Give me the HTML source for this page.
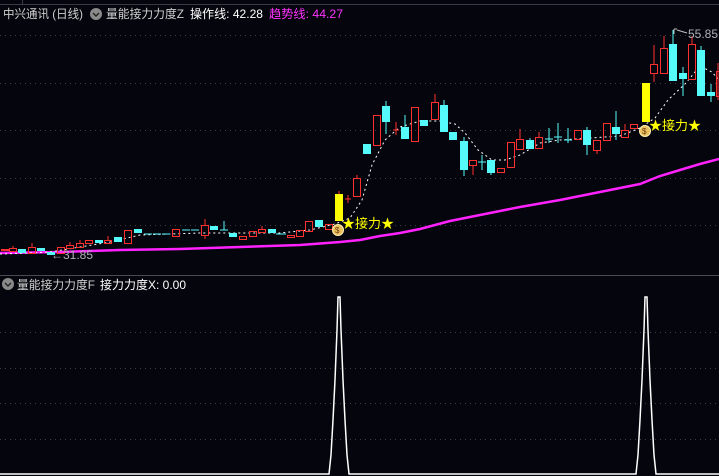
<!DOCTYPE html>
<html><head><meta charset="utf-8"><style>
html,body{margin:0;padding:0;background:#05050d;width:719px;height:476px;overflow:hidden}
svg{display:block}
text{font-family:"Liberation Sans","Noto Sans CJK SC",sans-serif}
</style></head><body>
<svg width="719" height="476" viewBox="0 0 719 476" xmlns="http://www.w3.org/2000/svg">
<rect width="719" height="476" fill="#05050d"/>
<line x1="0" y1="4.5" x2="719" y2="4.5" stroke="#3a3a44"/>
<line x1="22.5" y1="0" x2="22.5" y2="4" stroke="#3a3a44"/>
<g stroke="#3c3c44" stroke-dasharray="1,4">
<line x1="0" y1="35.5" x2="719" y2="35.5"/><line x1="0" y1="83.5" x2="719" y2="83.5"/>
<line x1="0" y1="130.5" x2="719" y2="130.5"/><line x1="0" y1="178.5" x2="719" y2="178.5"/>
<line x1="0" y1="225.5" x2="719" y2="225.5"/>
<line x1="0" y1="332.5" x2="719" y2="332.5"/><line x1="0" y1="368.5" x2="719" y2="368.5"/>
<line x1="0" y1="403.5" x2="719" y2="403.5"/><line x1="0" y1="439.5" x2="719" y2="439.5"/>
</g>
<line x1="0" y1="275.5" x2="719" y2="275.5" stroke="#4a4a52"/>
<!-- header -->
<text x="3" y="18" font-size="12" fill="#d0d0d0" textLength="80" lengthAdjust="spacingAndGlyphs">中兴通讯 (日线)</text>
<circle cx="96" cy="14" r="6" fill="#8a8a8a"/><path d="M93 13l3 3 3-3" stroke="#222" stroke-width="1.4" fill="none"/>
<text x="106" y="18" font-size="12" fill="#d0d0d0" textLength="78" lengthAdjust="spacingAndGlyphs">量能接力力度Z</text>
<text x="190" y="18" font-size="12" fill="#ffffff" textLength="73" lengthAdjust="spacingAndGlyphs">操作线: 42.28</text>
<text x="269" y="18" font-size="12" fill="#ff33ff" textLength="74" lengthAdjust="spacingAndGlyphs">趋势线: 44.27</text>
<circle cx="8" cy="284" r="6" fill="#8a8a8a"/><path d="M5 283l3 3 3-3" stroke="#222" stroke-width="1.4" fill="none"/>
<text x="17" y="289" font-size="12" fill="#d0d0d0" textLength="78" lengthAdjust="spacingAndGlyphs">量能接力力度F</text>
<text x="100" y="289" font-size="12" fill="#ffffff" textLength="86" lengthAdjust="spacingAndGlyphs">接力力度X: 0.00</text>
<!-- trend line -->
<polyline fill="none" stroke="#ff22ff" stroke-width="2.5" points="0,253 60,252 120,250 180,249 240,247 300,245 340,242 360,240 380,236 400,233 420,229 450,221 480,215 520,207 560,200 600,192 640,184 660,176 680,170 700,164 719,159"/>
<!-- MA dashed -->
<polyline fill="none" stroke="#ffffff" stroke-width="1" stroke-dasharray="2,3" points="0,254 30,253 50,252 80,247 110,242 140,235 170,234 200,233 240,233 280,233 310,230 335,224 350,218 362,200 372,165 385,140 400,127 420,121 440,121 455,124 465,133 478,150 492,160 505,160 520,155 540,143 560,140 590,138 620,136 640,128 655,118 668,100 685,84 700,66 712,72 719,80"/>
<!-- candles red -->
<g fill="none" stroke="#ff3030" stroke-width="1">
<path d="M13,246V248M32,243V247M70,242V245M80,240V243M108,236V240M205,219V225M205,235V239M262,226V229M357,175V178M348,195V203M345,199H351"/>
<rect x="1.5" y="249.5" width="7" height="1"/><rect x="9.5" y="248.5" width="7" height="3"/><rect x="28.5" y="247.5" width="7" height="6"/>
<rect x="57.5" y="247.5" width="7" height="6"/><rect x="66.5" y="245.5" width="7" height="3"/><rect x="76.5" y="243.5" width="7" height="4"/>
<rect x="85.5" y="240.5" width="7" height="3"/><rect x="104.5" y="240.5" width="7" height="3"/><rect x="124.5" y="230.5" width="7" height="13"/>
<rect x="172.5" y="229.5" width="7" height="7"/><rect x="201.5" y="225.5" width="7" height="10"/><rect x="239.5" y="236.5" width="7" height="3"/>
<rect x="249.5" y="231.5" width="7" height="5"/><rect x="258.5" y="229.5" width="7" height="3"/><rect x="287.5" y="235.5" width="7" height="2"/>
<rect x="296.5" y="230.5" width="7" height="6"/><rect x="305.5" y="221.5" width="7" height="10"/><rect x="325.5" y="224.5" width="7" height="5"/>
<rect x="353.5" y="178.5" width="7" height="18"/>
<rect x="373.5" y="115.5" width="7" height="30"/><path d="M396,122V135M393,130H399"/><rect x="411.5" y="107.5" width="7" height="34"/>
<path d="M435,94V102M473,165V175M520,129V139M539,132V137M597,150V154M625,124V130M654,45V64M654,73V82M664,36V48M692,36V44M718,63V100"/>
<rect x="431.5" y="102.5" width="7" height="17"/><rect x="469.5" y="160.5" width="7" height="5"/><rect x="497.5" y="168.5" width="7" height="4"/>
<rect x="507.5" y="142.5" width="7" height="25"/><rect x="516.5" y="139.5" width="7" height="10"/><rect x="535.5" y="137.5" width="7" height="11"/>
<rect x="574.5" y="130.5" width="7" height="9"/><rect x="593.5" y="140.5" width="7" height="10"/><rect x="603.5" y="123.5" width="7" height="17"/>
<rect x="621.5" y="130.5" width="7" height="7"/><rect x="630.5" y="124.5" width="7" height="4"/>
<rect x="650.5" y="64.5" width="7" height="9"/><rect x="660.5" y="48.5" width="7" height="25"/><rect x="688.5" y="44.5" width="7" height="35"/><rect x="716.5" y="71.5" width="7" height="25"/>
</g>
<!-- candles cyan -->
<g fill="#55fafa" stroke="#55fafa" stroke-width="1">
<rect x="18.5" y="249.5" width="7" height="3"/><rect x="37.5" y="248.5" width="7" height="2"/><rect x="47.5" y="252.5" width="7" height="2"/>
<rect x="95.5" y="240.5" width="7" height="2"/><rect x="114.5" y="237.5" width="7" height="4"/><rect x="134.5" y="229.5" width="7" height="3"/>
<path d="M144,234H152M153,234H161M162,234H170M182,230H190M191,230H199M210,228H218M224,221V230M220,230H228M276,234H286" fill="none"/>
<rect x="210.5" y="226.5" width="7" height="3"/><rect x="229.5" y="233.5" width="7" height="3"/><rect x="268.5" y="229.5" width="7" height="3"/>
<rect x="315.5" y="220.5" width="7" height="6"/>
<rect x="363.5" y="144.5" width="7" height="9"/><rect x="382.5" y="106.5" width="7" height="15"/><path d="M386,101V134M405,115V127M444,100V131M464,137V176M491,172V175M530,138V140M587,127V155M616,111V140M673,30V44M683,67V96M701,46V50M711,84V102" fill="none"/>
<rect x="401.5" y="127.5" width="7" height="11"/><rect x="420.5" y="120.5" width="7" height="5"/><rect x="440.5" y="105.5" width="7" height="26"/>
<rect x="449.5" y="132.5" width="7" height="7"/><rect x="460.5" y="141.5" width="7" height="28"/><path d="M478,162H486M482,155V170M545,139H553M549,128V143M554,137H562M558,123V143M564,140H572M568,128V143" fill="none"/>
<rect x="487.5" y="160.5" width="7" height="12"/><rect x="526.5" y="140.5" width="7" height="8"/><rect x="583.5" y="130.5" width="7" height="14"/>
<rect x="612.5" y="127.5" width="7" height="6"/><rect x="669.5" y="44.5" width="7" height="36"/><rect x="679.5" y="73.5" width="7" height="5"/>
<rect x="697.5" y="50.5" width="7" height="45"/><rect x="707.5" y="92.5" width="7" height="3"/>
</g>
<!-- yellow bars -->
<rect x="335" y="194" width="8" height="27" fill="#ffff00"/><line x1="339" y1="191" x2="339" y2="194" stroke="#ff3030"/>
<rect x="642" y="83" width="8" height="39" fill="#ffff00"/>
<!-- coins -->
<circle cx="338" cy="230" r="5.5" fill="#e8c060" stroke="#fff3b0"/><text x="335" y="233" font-size="8" fill="#6a3a10">$</text>
<circle cx="645" cy="131" r="5.5" fill="#e8c060" stroke="#fff3b0"/><text x="642" y="134" font-size="8" fill="#6a3a10">$</text>
<text x="342" y="228" font-size="13" fill="#ffff00">★接力★</text>
<text x="649" y="130" font-size="13" fill="#ffff00">★接力★</text>
<!-- price labels -->
<text x="51" y="259" font-size="12" fill="#b0b0b8">←31.85</text>
<path d="M674,29V34M674,29H677M677,30L687,33" stroke="#c0c0c0" fill="none"/>
<text x="688" y="38" font-size="12" fill="#b0b0b8">55.85</text>
<!-- lower panel -->
<polyline fill="none" stroke="#ffffff" stroke-width="1.5" points="0,474 329,474 331,455 333,420 335,380 337,330 338,297 340,297 341,330 343,380 345,420 347,455 349,474 636,474 638,455 640,420 642,380 644,330 645,297 647,297 648,330 650,380 652,420 654,455 656,474 719,474"/>
</svg>
</body></html>
